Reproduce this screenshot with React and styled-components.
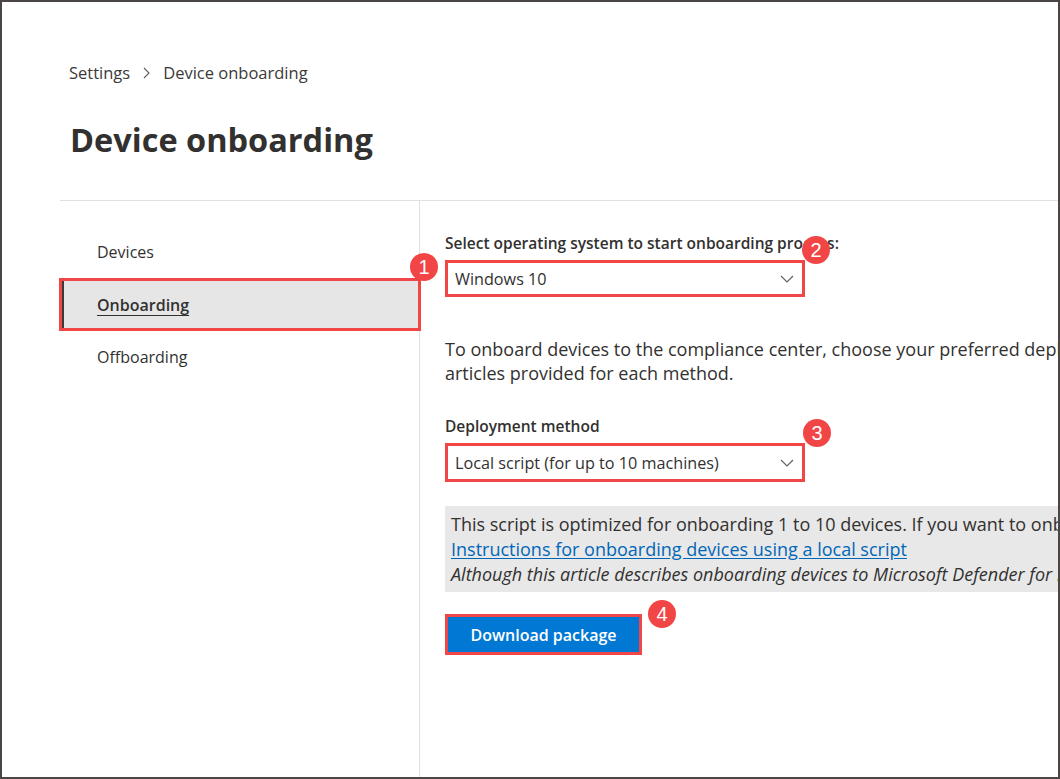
import React from 'react'
import styled, { createGlobalStyle } from 'styled-components'

const GlobalStyle = createGlobalStyle`
  html, body {
    margin: 0;
    padding: 0;
    background: #fff;
  }
  body {
    font-family: "Open Sans", "Liberation Sans", Arial, sans-serif;
    color: #323130;
  }
`

const RED = '#f24545'

const Frame = styled.div`
  width: 1060px;
  height: 779px;
  box-sizing: border-box;
  border: 2px solid #4a4646;
  background: #fff;
  overflow: hidden;
  display: flex;
  flex-direction: column;
`

const Header = styled.header`
  flex-shrink: 0;
  height: 198px;
  padding: 60px 0 0 67px;
  box-sizing: border-box;
`

const Breadcrumb = styled.nav`
  display: flex;
  align-items: center;
  gap: 13px;
  font-size: 16.5px;
  line-height: 22px;
  color: #3b3a39;
`

const Title = styled.h1`
  margin: 36px 0 0 1px;
  font-size: 32.5px;
  font-weight: 700;
  line-height: 40px;
  color: #323130;
`

const Body = styled.div`
  flex: 1;
  margin-left: 58px;
  border-top: 1px solid #e1e1e1;
  display: grid;
  grid-template-columns: 360px 1fr;
  min-height: 0;
`

const SideNav = styled.nav`
  border-right: 1px solid #e1e1e1;
  padding-top: 25px;
  display: flex;
  flex-direction: column;
`

const NavItem = styled.div`
  height: ${p => (p.selected ? '47px' : '52px')};
  display: flex;
  align-items: center;
  padding-left: ${p => (p.selected ? '33px' : '37px')};
  font-size: 16px;
  color: #323130;
  font-weight: ${p => (p.selected ? 600 : 400)};
  background: ${p => (p.selected ? '#e6e6e6' : 'transparent')};
  border-left: ${p => (p.selected ? '2px solid #3a3a3a' : 'none')};

  span {
    text-decoration: ${p => (p.selected ? 'underline' : 'none')};
    text-underline-offset: 4px;
    text-decoration-thickness: 1px;
  }
`

const Highlight = styled.div`
  position: relative;
  border: 3px solid ${RED};
  margin-left: ${p => p.$ml || 0}px;
  width: ${p => (p.$w ? `${p.$w}px` : 'auto')};
  box-sizing: border-box;
`

const Badge = styled.div`
  position: absolute;
  top: ${p => p.$top}px;
  right: ${p => p.$right}px;
  width: 28px;
  height: 28px;
  border-radius: 50%;
  background: ${RED};
  color: #fff;
  font-family: "Liberation Sans", Arial, sans-serif;
  font-size: 20px;
  display: flex;
  align-items: center;
  justify-content: center;
  z-index: 2;
`

const Content = styled.main`
  padding: 32px 0 0 25px;
  display: flex;
  flex-direction: column;
  min-width: 0;
  overflow: hidden;
`

const FieldLabel = styled.div`
  font-size: 15.5px;
  font-weight: 600;
  line-height: 20px;
  color: #323130;
  margin-bottom: ${p => p.$mb || 7}px;
  white-space: nowrap;
`

const Dropdown = styled.div`
  height: ${p => p.$h}px;
  display: flex;
  align-items: center;
  justify-content: space-between;
  padding: 0 8px 0 7px;
  font-size: 16.2px;
  color: #323130;
  background: #fff;
`

const Paragraph = styled.p`
  margin: 40px 0 0;
  font-size: 18px;
  line-height: 24px;
  color: #323130;
  white-space: nowrap;
`

const Section = styled.div`
  margin-top: ${p => p.$mt}px;
`

const InfoBox = styled.div`
  margin-top: 24px;
  background: #e8e8e8;
  padding: 6px 0 5px 6px;
  font-size: 18px;
  line-height: 25px;
  color: #323130;
  white-space: nowrap;
  width: 800px;
`

const InfoLink = styled.a`
  color: #0067b8;
  text-decoration: underline;
  text-underline-offset: 2px;
  display: block;
`

const Italic = styled.div`
  font-style: italic;
`

const Button = styled.button`
  display: block;
  width: 191px;
  height: 35px;
  border: none;
  background: #0078d4;
  color: #fff;
  font-family: inherit;
  font-size: 16px;
  font-weight: 600;
  cursor: pointer;
`

const ChevronDown = () => (
  <svg width="14" height="8" viewBox="0 0 14 8" fill="none">
    <path d="M1 1l6 6 6-6" stroke="#605e5c" strokeWidth="1.1" />
  </svg>
)

const ChevronRight = () => (
  <svg width="7" height="12" viewBox="0 0 7 12" fill="none">
    <path d="M1 1l5 5-5 5" stroke="#605e5c" strokeWidth="1.1" />
  </svg>
)

export default function App() {
  return (
    <>
      <GlobalStyle />
      <Frame>
        <Header>
          <Breadcrumb>
            <span>Settings</span>
            <ChevronRight />
            <span>Device onboarding</span>
          </Breadcrumb>
          <Title>Device onboarding</Title>
        </Header>

        <Body>
          <SideNav>
            <NavItem>Devices</NavItem>
            <Highlight $ml={-1} $w={362}>
              <NavItem selected>
                <span>Onboarding</span>
              </NavItem>
              <Badge $top={-28} $right={-20}>1</Badge>
            </Highlight>
            <NavItem>Offboarding</NavItem>
          </SideNav>

          <Content>
            <FieldLabel>Select operating system to start onboarding process:</FieldLabel>
            <Highlight $w={360}>
              <Dropdown $h={31}>
                <span>Windows 10</span>
                <ChevronDown />
              </Dropdown>
              <Badge $top={-27} $right={-28}>2</Badge>
            </Highlight>

            <Paragraph>
              To onboard devices to the compliance center, choose your preferred deployment method and follow the
              <br />
              articles provided for each method.
            </Paragraph>

            <Section $mt={31}>
              <FieldLabel $mb={7}>Deployment method</FieldLabel>
              <Highlight $w={360}>
                <Dropdown $h={33}>
                  <span>Local script (for up to 10 machines)</span>
                  <ChevronDown />
                </Dropdown>
                <Badge $top={-27} $right={-29}>3</Badge>
              </Highlight>
            </Section>

            <InfoBox>
              This script is optimized for onboarding 1 to 10 devices. If you want to onboard more devices, use another method.
              <InfoLink href="#">Instructions for onboarding devices using a local script</InfoLink>
              <Italic>Although this article describes onboarding devices to Microsoft Defender for Endpoint, the steps are the same.</Italic>
            </InfoBox>

            <Section $mt={22}>
              <Highlight $w={197}>
                <Button>Download package</Button>
                <Badge $top={-17} $right={-37}>4</Badge>
              </Highlight>
            </Section>
          </Content>
        </Body>
      </Frame>
    </>
  )
}
